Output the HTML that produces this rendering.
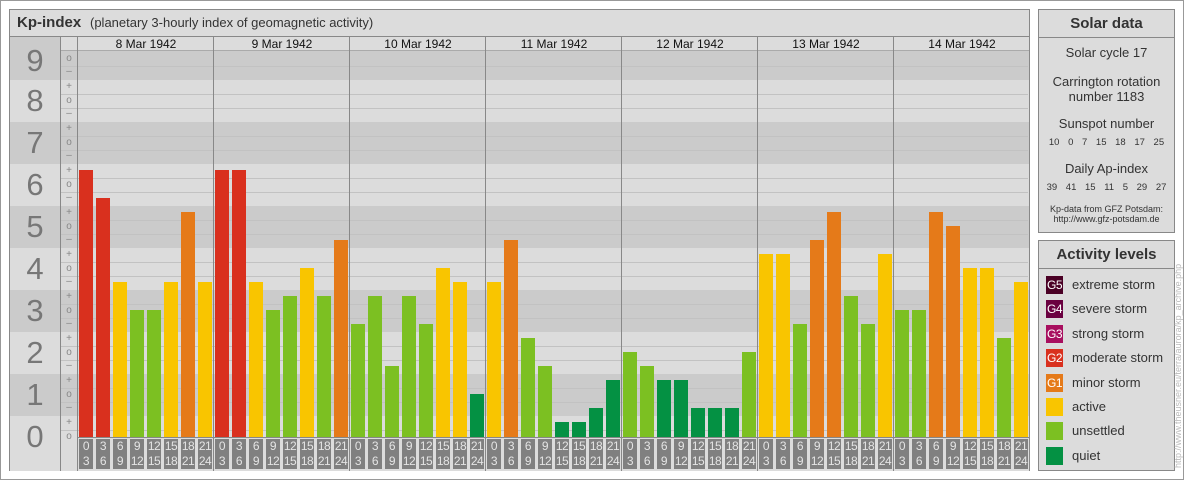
<!DOCTYPE html>
<html><head><meta charset="utf-8"><style>
*{margin:0;padding:0;box-sizing:border-box}
body{width:1184px;height:480px;background:#fff;font-family:"Liberation Sans",Arial,sans-serif;position:relative;overflow:hidden;color:#333}
.a{position:absolute}
.frame{left:0;top:0;width:1184px;height:480px;border:1px solid #999}
.main{left:9px;top:9px;width:1021px;height:462px;border:1px solid #888;background:#dcdcdc}
.band{position:absolute;left:10px;width:1019px}
.dk{background:#cbcbcb}.lt{background:#dcdcdc}
.ln{position:absolute;left:61px;width:967px;height:1px;background:#c2c2c2}
.num{position:absolute;left:10px;width:50px;text-align:center;font-size:31px;color:#777;line-height:30px}
.mk{position:absolute;left:61px;width:16px;text-align:center;font-size:10px;color:#888;line-height:10px}
.vl{position:absolute;top:37px;width:1px;height:434px;background:#888}
.date{position:absolute;top:37px;width:136px;text-align:center;font-size:12px;line-height:15px;color:#111}
.day{position:absolute;top:51px;height:386px;display:flex;align-items:flex-end;gap:3px}
.day div{width:14px}
.lab{position:absolute;top:439px;display:flex;gap:3px}
.lab div{width:14px;height:30px;background:#808080;color:#e4e4e4;font-size:12px;line-height:15px;text-align:center;letter-spacing:-0.5px}
.R{background:#d9301e}.O{background:#e57a19}.Y{background:#f9c500}.L{background:#7cc022}.D{background:#049143}
.box{border:1px solid #888;background:#dcdcdc}
.hd{font-weight:bold;font-size:15px;text-align:center;border-bottom:1px solid #888;line-height:27px;height:28px;color:#333}
.c{text-align:center;position:absolute;left:0;width:100%;font-size:13px;color:#333}
.sm{font-size:9.5px;word-spacing:6px}
.it{position:absolute;left:7px;font-size:13px;height:18px;line-height:18px;color:#333}
.it i{display:inline-block;width:17px;height:18px;vertical-align:top;margin-right:9px;color:#fff;font-style:normal;font-size:12px;text-align:center;letter-spacing:-0.5px}
</style></head><body>
<div class="a frame"></div>
<div class="a main"></div>
<div class="a" style="left:10px;top:10px;width:1019px;height:27px;border-bottom:1px solid #888;background:#dcdcdc"></div>
<div class="a" style="left:17px;top:14px;font-size:15px;font-weight:bold;color:#333">Kp-index</div>
<div class="a" style="left:90px;top:15px;font-size:13px;color:#333">(planetary 3-hourly index of geomagnetic activity)</div>
<div class="a" style="left:61px;top:37px;width:968px;height:14px;background:#dcdcdc;border-bottom:1px solid #aaa"></div>

<div class="band dk" style="top:51px;height:29px"></div>
<div class="band lt" style="top:80px;height:42px"></div>
<div class="band dk" style="top:122px;height:42px"></div>
<div class="band lt" style="top:164px;height:42px"></div>
<div class="band dk" style="top:206px;height:42px"></div>
<div class="band lt" style="top:248px;height:42px"></div>
<div class="band dk" style="top:290px;height:42px"></div>
<div class="band lt" style="top:332px;height:42px"></div>
<div class="band dk" style="top:374px;height:42px"></div>
<div class="band lt" style="top:416px;height:55px"></div>
<div class="a" style="left:10px;top:37px;width:50px;height:14px;background:#cbcbcb"></div>

<div class="ln" style="top:66px"></div><div class="ln" style="top:94px"></div><div class="ln" style="top:108px"></div><div class="ln" style="top:136px"></div><div class="ln" style="top:150px"></div><div class="ln" style="top:178px"></div><div class="ln" style="top:192px"></div><div class="ln" style="top:220px"></div><div class="ln" style="top:234px"></div><div class="ln" style="top:262px"></div><div class="ln" style="top:276px"></div><div class="ln" style="top:304px"></div><div class="ln" style="top:318px"></div><div class="ln" style="top:346px"></div><div class="ln" style="top:360px"></div><div class="ln" style="top:388px"></div><div class="ln" style="top:402px"></div><div class="ln" style="top:430px"></div>

<div class="num" style="top:46px">9</div><div class="num" style="top:86px">8</div><div class="num" style="top:128px">7</div><div class="num" style="top:170px">6</div><div class="num" style="top:212px">5</div><div class="num" style="top:254px">4</div><div class="num" style="top:296px">3</div><div class="num" style="top:338px">2</div><div class="num" style="top:380px">1</div><div class="num" style="top:422px">0</div>

<div class="mk" style="top:54px">o</div><div class="mk" style="top:67px">–</div>
<div class="mk" style="top:82px">+</div><div class="mk" style="top:96px">o</div><div class="mk" style="top:109px">–</div>
<div class="mk" style="top:124px">+</div><div class="mk" style="top:138px">o</div><div class="mk" style="top:151px">–</div>
<div class="mk" style="top:166px">+</div><div class="mk" style="top:180px">o</div><div class="mk" style="top:193px">–</div>
<div class="mk" style="top:208px">+</div><div class="mk" style="top:222px">o</div><div class="mk" style="top:235px">–</div>
<div class="mk" style="top:250px">+</div><div class="mk" style="top:264px">o</div><div class="mk" style="top:277px">–</div>
<div class="mk" style="top:292px">+</div><div class="mk" style="top:306px">o</div><div class="mk" style="top:319px">–</div>
<div class="mk" style="top:334px">+</div><div class="mk" style="top:348px">o</div><div class="mk" style="top:361px">–</div>
<div class="mk" style="top:376px">+</div><div class="mk" style="top:390px">o</div><div class="mk" style="top:403px">–</div>
<div class="mk" style="top:418px">+</div><div class="mk" style="top:432px">o</div>

<div class="vl" style="left:60px"></div>
<div class="vl" style="left:77px"></div><div class="vl" style="left:213px"></div><div class="vl" style="left:349px"></div><div class="vl" style="left:485px"></div><div class="vl" style="left:621px"></div><div class="vl" style="left:757px"></div><div class="vl" style="left:893px"></div>
<div class="a" style="left:77px;top:437px;width:952px;height:1px;background:#888"></div>

<div class="date" style="left:78px">8 Mar 1942</div><div class="date" style="left:214px">9 Mar 1942</div><div class="date" style="left:350px">10 Mar 1942</div><div class="date" style="left:486px">11 Mar 1942</div><div class="date" style="left:622px">12 Mar 1942</div><div class="date" style="left:758px">13 Mar 1942</div><div class="date" style="left:894px">14 Mar 1942</div>

<div class="day" style="left:79px"><div class="R" style="height:267px"></div><div class="R" style="height:239px"></div><div class="Y" style="height:155px"></div><div class="L" style="height:127px"></div><div class="L" style="height:127px"></div><div class="Y" style="height:155px"></div><div class="O" style="height:225px"></div><div class="Y" style="height:155px"></div></div>
<div class="day" style="left:215px"><div class="R" style="height:267px"></div><div class="R" style="height:267px"></div><div class="Y" style="height:155px"></div><div class="L" style="height:127px"></div><div class="L" style="height:141px"></div><div class="Y" style="height:169px"></div><div class="L" style="height:141px"></div><div class="O" style="height:197px"></div></div>
<div class="day" style="left:351px"><div class="L" style="height:113px"></div><div class="L" style="height:141px"></div><div class="L" style="height:71px"></div><div class="L" style="height:141px"></div><div class="L" style="height:113px"></div><div class="Y" style="height:169px"></div><div class="Y" style="height:155px"></div><div class="D" style="height:43px"></div></div>
<div class="day" style="left:487px"><div class="Y" style="height:155px"></div><div class="O" style="height:197px"></div><div class="L" style="height:99px"></div><div class="L" style="height:71px"></div><div class="D" style="height:15px"></div><div class="D" style="height:15px"></div><div class="D" style="height:29px"></div><div class="D" style="height:57px"></div></div>
<div class="day" style="left:623px"><div class="L" style="height:85px"></div><div class="L" style="height:71px"></div><div class="D" style="height:57px"></div><div class="D" style="height:57px"></div><div class="D" style="height:29px"></div><div class="D" style="height:29px"></div><div class="D" style="height:29px"></div><div class="L" style="height:85px"></div></div>
<div class="day" style="left:759px"><div class="Y" style="height:183px"></div><div class="Y" style="height:183px"></div><div class="L" style="height:113px"></div><div class="O" style="height:197px"></div><div class="O" style="height:225px"></div><div class="L" style="height:141px"></div><div class="L" style="height:113px"></div><div class="Y" style="height:183px"></div></div>
<div class="day" style="left:895px"><div class="L" style="height:127px"></div><div class="L" style="height:127px"></div><div class="O" style="height:225px"></div><div class="O" style="height:211px"></div><div class="Y" style="height:169px"></div><div class="Y" style="height:169px"></div><div class="L" style="height:99px"></div><div class="Y" style="height:155px"></div></div>

<div class="lab" style="left:79px"><div>0<br>3</div><div>3<br>6</div><div>6<br>9</div><div>9<br>12</div><div>12<br>15</div><div>15<br>18</div><div>18<br>21</div><div>21<br>24</div></div>
<div class="lab" style="left:215px"><div>0<br>3</div><div>3<br>6</div><div>6<br>9</div><div>9<br>12</div><div>12<br>15</div><div>15<br>18</div><div>18<br>21</div><div>21<br>24</div></div>
<div class="lab" style="left:351px"><div>0<br>3</div><div>3<br>6</div><div>6<br>9</div><div>9<br>12</div><div>12<br>15</div><div>15<br>18</div><div>18<br>21</div><div>21<br>24</div></div>
<div class="lab" style="left:487px"><div>0<br>3</div><div>3<br>6</div><div>6<br>9</div><div>9<br>12</div><div>12<br>15</div><div>15<br>18</div><div>18<br>21</div><div>21<br>24</div></div>
<div class="lab" style="left:623px"><div>0<br>3</div><div>3<br>6</div><div>6<br>9</div><div>9<br>12</div><div>12<br>15</div><div>15<br>18</div><div>18<br>21</div><div>21<br>24</div></div>
<div class="lab" style="left:759px"><div>0<br>3</div><div>3<br>6</div><div>6<br>9</div><div>9<br>12</div><div>12<br>15</div><div>15<br>18</div><div>18<br>21</div><div>21<br>24</div></div>
<div class="lab" style="left:895px"><div>0<br>3</div><div>3<br>6</div><div>6<br>9</div><div>9<br>12</div><div>12<br>15</div><div>15<br>18</div><div>18<br>21</div><div>21<br>24</div></div>

<div class="a box" style="left:1038px;top:9px;width:137px;height:224px">
<div class="hd">Solar data</div>
<div class="c" style="top:35px">Solar cycle 17</div>
<div class="c" style="top:64px;line-height:15px">Carrington rotation<br>number 1183</div>
<div class="c" style="top:106px">Sunspot number</div>
<div class="c sm" style="top:127px">10 0 7 15 18 17 25</div>
<div class="c" style="top:151px">Daily Ap-index</div>
<div class="c sm" style="top:172px">39 41 15 11 5 29 27</div>
<div class="c" style="top:194px;font-size:9px;line-height:10px">Kp-data from GFZ Potsdam:<br>http://www.gfz-potsdam.de</div>
</div>

<div class="a box" style="left:1038px;top:240px;width:137px;height:231px">
<div class="hd">Activity levels</div>
<div class="it" style="top:35px"><i style="background:#4a0025">G5</i>extreme storm</div>
<div class="it" style="top:59px"><i style="background:#6a0040">G4</i>severe storm</div>
<div class="it" style="top:84px"><i style="background:#a80f5f">G3</i>strong storm</div>
<div class="it" style="top:108px"><i class="R">G2</i>moderate storm</div>
<div class="it" style="top:133px"><i class="O">G1</i>minor storm</div>
<div class="it" style="top:157px"><i class="Y"></i>active</div>
<div class="it" style="top:181px"><i class="L"></i>unsettled</div>
<div class="it" style="top:206px"><i class="D"></i>quiet</div>
</div>

<div class="a" style="left:1179px;top:468px;transform:rotate(-90deg);transform-origin:0 0;font-size:9px;color:#bbb;white-space:nowrap;width:215px;line-height:9px;margin-left:-5px">http://www.theusner.eu/terra/aurora/kp_archive.php</div>
</body></html>
